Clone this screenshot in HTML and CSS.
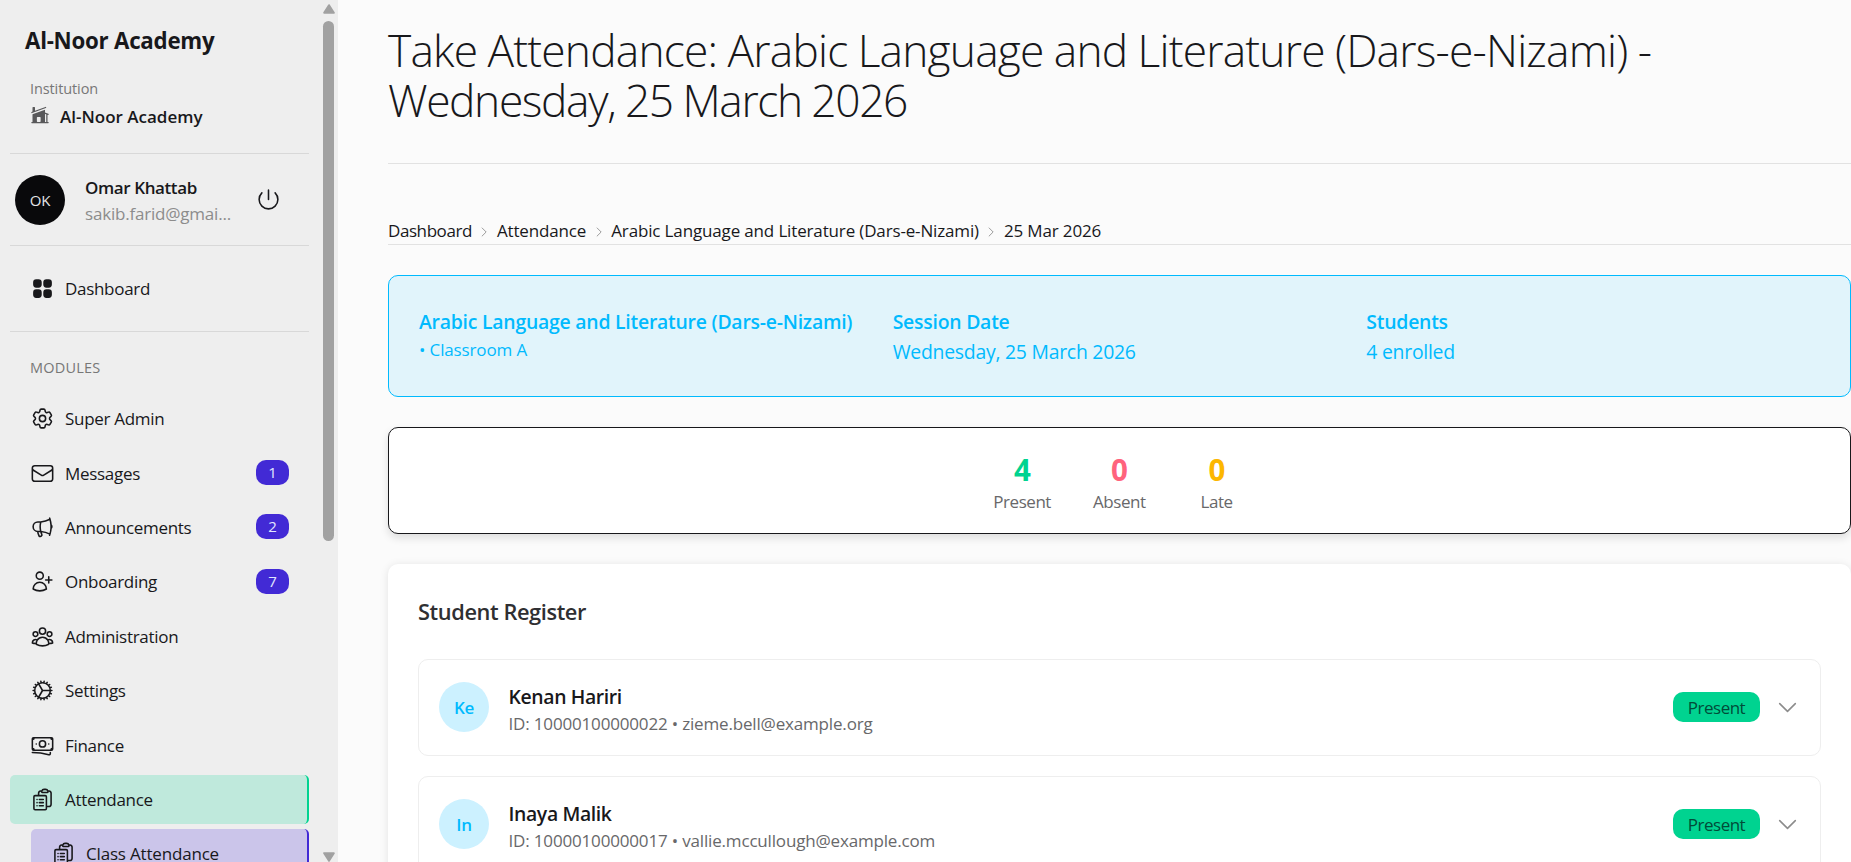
FILE: index.html
```html
<!DOCTYPE html>
<html lang="en">
<head>
  <meta charset="UTF-8">
  <meta name="viewport" content="width=device-width, initial-scale=1.0">
  <title>Take Attendance</title>
  <link rel="stylesheet" href="styles.css">
</head>
<body>
  <!-- Shared icons -->
  <svg class="sprite">
    <symbol id="clipboard" viewBox="0 0 24 24">
      <path d="M9 12h3.75M9 15h3.75M9 18h3.75m3 .75H18a2.25 2.25 0 0 0 2.25-2.25V6.108c0-1.135-.845-2.098-1.976-2.192a48.424 48.424 0 0 0-1.123-.08m-5.801 0c-.065.21-.1.433-.1.664 0 .414.336.75.75.75h4.5a.75.75 0 0 0 .75-.75 2.25 2.25 0 0 0-.1-.664m-5.8 0A2.251 2.251 0 0 1 13.5 2.25H15c1.012 0 1.867.668 2.15 1.586m-5.8 0c-.376.023-.75.05-1.124.08C9.095 4.01 8.25 4.973 8.25 6.108V8.25m0 0H4.875c-.621 0-1.125.504-1.125 1.125v11.25c0 .621.504 1.125 1.125 1.125h9.75c.621 0 1.125-.504 1.125-1.125V9.375c0-.621-.504-1.125-1.125-1.125H8.25ZM6.75 12h.008v.008H6.75V12Zm0 3h.008v.008H6.75V15Zm0 3h.008v.008H6.75V18Z"/>
    </symbol>
    <symbol id="chevron-down" viewBox="0 0 24 24">
      <path d="m19.5 8.25-7.5 7.5-7.5-7.5"/>
    </symbol>
    <symbol id="chevron-right" viewBox="0 0 7 12">
      <path d="m1 1 5 5-5 5"/>
    </symbol>
  </svg>

  <div class="layout">
    <aside class="sidebar">
      <div class="sidebar-content">
        <div class="brand">Al-Noor Academy</div>

        <div class="institution">
          <span class="institution-label">Institution</span>
          <div class="institution-name">
            <svg class="icon-home" viewBox="0 0 24 24">
              <path d="M19.006 3.705a.75.75 0 1 0-.512-1.41L6 6.838V3a.75.75 0 0 0-.75-.75h-1.5A.75.75 0 0 0 3 3v4.93l-1.006.365a.75.75 0 0 0 .512 1.41l16.5-6Z"/>
              <path fill-rule="evenodd" d="M3.019 11.114 18 5.667v3.421l4.006 1.457a.75.75 0 1 1-.512 1.41l-.494-.18v8.475h.75a.75.75 0 0 1 0 1.5H2.25a.75.75 0 0 1 0-1.5H3v-9.129l.019-.007ZM18 20.25v-9.566l1.5.546v9.02H18Zm-9-6a.75.75 0 0 0-.75.75v4.5c0 .414.336.75.75.75h3a.75.75 0 0 0 .75-.75V15a.75.75 0 0 0-.75-.75H9Z"/>
            </svg>
            <span>Al-Noor Academy</span>
          </div>
        </div>

        <div class="user">
          <div class="user-avatar">OK</div>
          <div class="user-info">
            <div class="user-name">Omar Khattab</div>
            <div class="user-email">sakib.farid@gmai...</div>
          </div>
          <svg class="icon" viewBox="0 0 24 24"><path d="M5.636 5.636a9 9 0 1 0 12.728 0M12 3v9"/></svg>
        </div>

        <ul class="menu menu-top">
          <li>
            <a href="#" class="menu-link">
              <svg class="icon icon-solid" viewBox="0 0 24 24"><path fill-rule="evenodd" d="M3 6a3 3 0 0 1 3-3h2.25a3 3 0 0 1 3 3v2.25a3 3 0 0 1-3 3H6a3 3 0 0 1-3-3V6Zm9.75 0a3 3 0 0 1 3-3H18a3 3 0 0 1 3 3v2.25a3 3 0 0 1-3 3h-2.25a3 3 0 0 1-3-3V6ZM3 15.75a3 3 0 0 1 3-3h2.25a3 3 0 0 1 3 3V18a3 3 0 0 1-3 3H6a3 3 0 0 1-3-3v-2.25Zm9.75 0a3 3 0 0 1 3-3H18a3 3 0 0 1 3 3V18a3 3 0 0 1-3 3h-2.25a3 3 0 0 1-3-3v-2.25Z"/></svg>
              <span>Dashboard</span>
            </a>
          </li>
        </ul>

        <div class="menu-title">MODULES</div>
        <ul class="menu">
          <li>
            <a href="#" class="menu-link">
              <svg class="icon" viewBox="0 0 24 24"><path d="M9.594 3.94c.09-.542.56-.94 1.11-.94h2.593c.55 0 1.02.398 1.11.94l.213 1.281c.063.374.313.686.645.87.074.04.147.083.22.127.325.196.72.257 1.075.124l1.217-.456a1.125 1.125 0 0 1 1.37.49l1.296 2.247a1.125 1.125 0 0 1-.26 1.431l-1.003.827c-.293.241-.438.613-.43.992a7.723 7.723 0 0 1 0 .255c-.008.378.137.75.43.991l1.004.827c.424.35.534.955.26 1.43l-1.298 2.247a1.125 1.125 0 0 1-1.369.491l-1.217-.456c-.355-.133-.75-.072-1.076.124a6.47 6.47 0 0 1-.22.128c-.331.183-.581.495-.644.869l-.213 1.281c-.09.543-.56.94-1.11.94h-2.594c-.55 0-1.019-.398-1.11-.94l-.213-1.281c-.062-.374-.312-.686-.644-.87a6.52 6.52 0 0 1-.22-.127c-.325-.196-.72-.257-1.076-.124l-1.217.456a1.125 1.125 0 0 1-1.369-.49l-1.297-2.247a1.125 1.125 0 0 1 .26-1.431l1.004-.827c.292-.24.437-.613.43-.991a6.932 6.932 0 0 1 0-.255c.007-.38-.138-.751-.43-.992l-1.004-.827a1.125 1.125 0 0 1-.26-1.43l1.297-2.247a1.125 1.125 0 0 1 1.37-.491l1.216.456c.356.133.751.072 1.076-.124.072-.044.146-.086.22-.128.332-.183.582-.495.644-.869l.214-1.28Z"/><path d="M15 12a3 3 0 1 1-6 0 3 3 0 0 1 6 0Z"/></svg>
              <span>Super Admin</span>
            </a>
          </li>
          <li>
            <a href="#" class="menu-link">
              <svg class="icon" viewBox="0 0 24 24"><path d="M21.75 6.75v10.5a2.25 2.25 0 0 1-2.25 2.25h-15a2.25 2.25 0 0 1-2.25-2.25V6.75m19.5 0A2.25 2.25 0 0 0 19.5 4.5h-15a2.25 2.25 0 0 0-2.25 2.25m19.5 0v.243a2.25 2.25 0 0 1-1.07 1.916l-7.5 4.615a2.25 2.25 0 0 1-2.36 0L3.32 8.91a2.25 2.25 0 0 1-1.07-1.916V6.75"/></svg>
              <span>Messages</span>
              <span class="count">1</span>
            </a>
          </li>
          <li>
            <a href="#" class="menu-link">
              <svg class="icon" viewBox="0 0 24 24"><path d="M10.34 15.84c-.688-.06-1.386-.09-2.09-.09H7.5a4.5 4.5 0 1 1 0-9h.75c.704 0 1.402-.03 2.09-.09m0 9.18c.253.962.584 1.892.985 2.783.247.55.06 1.21-.463 1.511l-.657.38c-.551.318-1.26.117-1.527-.461a20.845 20.845 0 0 1-1.44-4.282m3.102.069a18.03 18.03 0 0 1-.59-4.59c0-1.586.205-3.124.59-4.59m0 9.18a23.848 23.848 0 0 1 8.835 2.535M10.34 6.66a23.847 23.847 0 0 0 8.835-2.535m0 0A23.74 23.74 0 0 0 18.795 3m.38 1.125a23.91 23.91 0 0 1 1.014 5.395m-1.014 8.855c-.118.38-.245.754-.38 1.125m.38-1.125a23.91 23.91 0 0 0 1.014-5.395m0-3.46c.495.413.811 1.035.811 1.73 0 .695-.316 1.317-.811 1.73m0-3.46a24.347 24.347 0 0 1 0 3.46"/></svg>
              <span>Announcements</span>
              <span class="count">2</span>
            </a>
          </li>
          <li>
            <a href="#" class="menu-link">
              <svg class="icon" viewBox="0 0 24 24"><path d="M18 7.5v3m0 0v3m0-3h3m-3 0h-3m-2.25-4.125a3.375 3.375 0 1 1-6.75 0 3.375 3.375 0 0 1 6.75 0ZM3 19.235v-.11a6.375 6.375 0 0 1 12.75 0v.109A12.318 12.318 0 0 1 9.374 21c-2.331 0-4.512-.645-6.374-1.766Z"/></svg>
              <span>Onboarding</span>
              <span class="count">7</span>
            </a>
          </li>
          <li>
            <a href="#" class="menu-link">
              <svg class="icon" viewBox="0 0 24 24"><path d="M18 18.72a9.094 9.094 0 0 0 3.741-.479 3 3 0 0 0-4.682-2.72m.94 3.198.001.031c0 .225-.012.447-.037.666A11.944 11.944 0 0 1 12 21c-2.17 0-4.207-.576-5.963-1.584A6.062 6.062 0 0 1 6 18.719m12 0a5.971 5.971 0 0 0-.941-3.197m0 0A5.995 5.995 0 0 0 12 12.75a5.995 5.995 0 0 0-5.058 2.772m0 0a3 3 0 0 0-4.681 2.72 8.986 8.986 0 0 0 3.74.477m.94-3.197a5.971 5.971 0 0 0-.94 3.197M15 6.75a3 3 0 1 1-6 0 3 3 0 0 1 6 0Zm6 3a2.25 2.25 0 1 1-4.5 0 2.25 2.25 0 0 1 4.5 0Zm-13.5 0a2.25 2.25 0 1 1-4.5 0 2.25 2.25 0 0 1 4.5 0Z"/></svg>
              <span>Administration</span>
            </a>
          </li>
          <li>
            <a href="#" class="menu-link">
              <svg class="icon" viewBox="0 0 24 24"><path d="M4.5 12a7.5 7.5 0 0 0 15 0m-15 0a7.5 7.5 0 1 1 15 0m-15 0H3m16.5 0H21m-1.5 0H12m-8.457 3.077 1.41-.513m14.095-5.13 1.41-.513M5.106 17.785l1.15-.964m11.49-9.642 1.149-.964M7.501 19.795l.75-1.3m7.5-12.99.75-1.3m-6.063 16.658.26-1.477m2.605-14.772.26-1.477m0 17.726-.26-1.477M10.698 4.614l-.26-1.477M16.5 19.794l-.75-1.299M7.5 4.205 12 12m6.894 5.785-1.149-.964M6.256 7.178l-1.15-.964m15.352 8.864-1.41-.513M4.954 9.435l-1.41-.514M12.002 12l-3.75 6.495"/></svg>
              <span>Settings</span>
            </a>
          </li>
          <li>
            <a href="#" class="menu-link">
              <svg class="icon" viewBox="0 0 24 24"><path d="M2.25 18.75a60.07 60.07 0 0 1 15.797 2.101c.727.198 1.453-.342 1.453-1.096V18.75M3.75 4.5v.75A.75.75 0 0 1 3 6h-.75m0 0v-.375c0-.621.504-1.125 1.125-1.125H20.25M2.25 6v9m18-10.5v.75c0 .414.336.75.75.75h.75m-1.5-1.5h.375c.621 0 1.125.504 1.125 1.125v9.75c0 .621-.504 1.125-1.125 1.125h-.375m1.5-1.5H21a.75.75 0 0 0-.75.75v.75m0 0H3.75m0 0h-.375a1.125 1.125 0 0 1-1.125-1.125V15m1.5 1.5v-.75A.75.75 0 0 0 3 15h-.75M15 10.5a3 3 0 1 1-6 0 3 3 0 0 1 6 0Zm3 0h.008v.008H18V10.5Zm-12 0h.008v.008H6V10.5Z"/></svg>
              <span>Finance</span>
            </a>
          </li>
          <li>
            <a href="#" class="menu-link active">
              <svg class="icon"><use href="#clipboard"/></svg>
              <span>Attendance</span>
            </a>
            <ul class="submenu">
              <li>
                <a href="#" class="menu-link active-sub">
                  <svg class="icon"><use href="#clipboard"/></svg>
                  <span>Class Attendance</span>
                </a>
              </li>
            </ul>
          </li>
        </ul>
      </div>

      <div class="scrollbar">
        <svg class="scroll-arrow" viewBox="0 0 12 10"><path d="M6 1.2 10.8 8.8H1.2Z"/></svg>
        <div class="scroll-thumb"></div>
        <svg class="scroll-arrow scroll-down" viewBox="0 0 12 10"><path d="M1.2 1.2h9.6L6 8.8Z"/></svg>
      </div>
    </aside>

    <main class="content">
      <h1 class="page-title">Take Attendance: Arabic Language and Literature (Dars-e-Nizami) - <span class="page-title-date">Wednesday, 25 March 2026</span></h1>

      <nav class="breadcrumbs">
        <a href="#" class="crumb-home">Dashboard</a>
        <svg class="separator"><use href="#chevron-right"/></svg>
        <a href="#">Attendance</a>
        <svg class="separator"><use href="#chevron-right"/></svg>
        <a href="#">Arabic Language and Literature (Dars-e-Nizami)</a>
        <svg class="separator"><use href="#chevron-right"/></svg>
        <span>25 Mar 2026</span>
      </nav>

      <section class="session">
        <div>
          <h3>Arabic Language and Literature (Dars-e-Nizami)</h3>
          <p class="session-room">• Classroom A</p>
        </div>
        <div>
          <h3>Session Date</h3>
          <p>Wednesday, 25 March 2026</p>
        </div>
        <div>
          <h3>Students</h3>
          <p>4 enrolled</p>
        </div>
      </section>

      <section class="stats">
        <div class="stat">
          <div class="stat-value present">4</div>
          <div class="stat-label">Present</div>
        </div>
        <div class="stat">
          <div class="stat-value absent">0</div>
          <div class="stat-label">Absent</div>
        </div>
        <div class="stat">
          <div class="stat-value late">0</div>
          <div class="stat-label">Late</div>
        </div>
      </section>

      <section class="register">
        <h2>Student Register</h2>
        <div class="student">
          <div class="student-avatar">Ke</div>
          <div class="student-info">
            <div class="student-name">Kenan Hariri</div>
            <div class="student-meta">ID: 10000100000022 • zieme.bell@example.org</div>
          </div>
          <span class="status">Present</span>
          <svg class="icon chevron"><use href="#chevron-down"/></svg>
        </div>
        <div class="student">
          <div class="student-avatar">In</div>
          <div class="student-info">
            <div class="student-name">Inaya Malik</div>
            <div class="student-meta">ID: 10000100000017 • vallie.mccullough@example.com</div>
          </div>
          <span class="status">Present</span>
          <svg class="icon chevron"><use href="#chevron-down"/></svg>
        </div>
      </section>
    </main>
  </div>
</body>
</html>
```
FILE: styles.css
```css
* {
  box-sizing: border-box;
  margin: 0;
  padding: 0;
}

body {
  font-family: "Open Sans", "Noto Sans", sans-serif;
  font-size: 17px;
  letter-spacing: -0.25px;
  line-height: 25px;
  color: #18181b;
  background-color: #fbfbfb;
  overflow: hidden;
}

ul {
  list-style: none;
}

a {
  color: inherit;
  text-decoration: none;
}

.sprite {
  display: none;
}

.icon {
  width: 25px;
  height: 25px;
  flex-shrink: 0;
  fill: none;
  stroke: currentColor;
  stroke-width: 1.5;
  stroke-linecap: round;
  stroke-linejoin: round;
}

.icon-solid {
  fill: currentColor;
  stroke: none;
}

.layout {
  display: flex;
  height: 862px;
}

/* Sidebar */
.sidebar {
  display: flex;
  width: 338px;
  flex-shrink: 0;
  background-color: #eeeeee;
}

.sidebar-content {
  width: 323px;
  padding: 0 14px 0 10px;
  overflow: hidden;
}

.brand {
  padding: 26px 15px 0;
  font-size: 22.3px;
  font-weight: 700;
  line-height: 30px;
  letter-spacing: -0.25px;
}

.institution {
  height: 98px;
  padding: 22px 20px 0;
  border-bottom: 1px solid #d8d8d8;
}

.institution-label {
  display: block;
  font-size: 14.5px;
  line-height: 22px;
  letter-spacing: -0.1px;
  color: #777777;
}

.institution-name {
  display: flex;
  align-items: center;
  gap: 10px;
  margin-top: 4px;
  font-weight: 600;
  letter-spacing: 0;
}

.icon-home {
  width: 20px;
  height: 20px;
  margin-top: -4px;
  fill: #58585a;
}

.user {
  display: flex;
  align-items: center;
  height: 92px;
  padding: 0 28px 0 5px;
  border-bottom: 1px solid #d8d8d8;
}

.user-avatar {
  width: 50px;
  height: 50px;
  border-radius: 50%;
  background-color: #09090b;
  color: #e4e4e7;
  font-size: 15px;
  line-height: 51px;
  text-align: center;
}

.user-info {
  flex: 1;
  padding: 2px 0 0 20px;
  line-height: 26px;
}

.user-name {
  font-weight: 600;
  letter-spacing: -0.4px;
}

.user-email {
  letter-spacing: -0.2px;
  color: #8c8c8c;
}

.menu-link {
  display: flex;
  align-items: center;
  gap: 10px;
  height: 49.4px;
  margin-bottom: 5px;
  padding: 0 20px;
  border-radius: 5px;
  letter-spacing: -0.3px;
}

.menu-top {
  height: 86px;
  padding-top: 18px;
  border-bottom: 1px solid #d8d8d8;
}

.menu-title {
  padding: 24px 20px 15px;
  font-size: 14.5px;
  line-height: 23px;
  letter-spacing: 0.2px;
  color: #777777;
}

.count {
  width: 33px;
  height: 25px;
  margin: -1px 0 0 auto;
  border-radius: 10px;
  background-color: #422ad5;
  color: #e0e7ff;
  font-size: 15px;
  line-height: 25px;
  text-align: center;
}

.active {
  background-color: #bfe9dc;
  border-right: 2px solid #00d390;
}

.submenu {
  padding-left: 21px;
}

.active-sub {
  background-color: #cbc5ea;
  border-right: 2px solid #422ad5;
  letter-spacing: -0.18px;
}

.scrollbar {
  display: flex;
  flex-direction: column;
  width: 11px;
  padding-top: 4px;
}

.scroll-arrow {
  width: 12px;
  height: 10px;
  fill: #a1a1a1;
  stroke: #a1a1a1;
  stroke-width: 2;
  stroke-linejoin: round;
}

.scroll-thumb {
  height: 520px;
  margin-top: 7px;
  border-radius: 6px;
  background-color: #a1a1a1;
}

.scroll-down {
  margin-top: auto;
}

/* Main content */
.content {
  flex: 1;
  padding: 25px 0 0 50px;
}

.page-title {
  height: 139px;
  padding-right: 100px;
  border-bottom: 1px solid #e2e2e2;
  font-size: 44.3px;
  font-weight: 300;
  line-height: 50px;
  letter-spacing: -0.8px;
  word-spacing: -0.5px;
}

.page-title-date {
  letter-spacing: -1.37px;
}

.breadcrumbs {
  display: flex;
  align-items: center;
  height: 81px;
  padding-top: 53px;
  border-bottom: 1px solid #e2e2e2;
  letter-spacing: -0.15px;
}

.crumb-home {
  letter-spacing: -0.42px;
}

.separator {
  width: 6px;
  height: 12px;
  margin: 3px 9.5px 0;
  fill: none;
  stroke: #8c8c8c;
}

.session {
  display: grid;
  grid-template-columns: repeat(3, 1fr);
  gap: 20px;
  height: 122px;
  margin-top: 30px;
  padding: 32px 30px;
  border: 1px solid #00bafe;
  border-radius: 10px;
  background-color: #e1f4fb;
  color: #00bafe;
  font-size: 19.4px;
  line-height: 32px;
}

.session h3 {
  font-size: 19.4px;
  font-weight: 600;
  line-height: 28px;
  letter-spacing: -0.23px;
  white-space: nowrap;
}

.session .session-room {
  font-size: 17px;
  line-height: 27px;
  letter-spacing: -0.13px;
}

.stats {
  display: flex;
  justify-content: center;
  gap: 42px;
  height: 107px;
  margin-top: 30px;
  padding-top: 23px;
  border: 1px solid #18181b;
  border-radius: 10px;
  background-color: #ffffff;
  box-shadow: 0 4px 8px rgba(0, 0, 0, 0.12);
}

.stat {
  text-align: center;
  letter-spacing: -0.45px;
}

.stat:last-child {
  padding: 0 13px;
}

.stat-value {
  font-size: 29.5px;
  font-weight: 700;
  line-height: 37px;
}

.stat-label {
  line-height: 27px;
  color: #68686a;
}

.present {
  color: #00d390;
}

.absent {
  color: #ff637d;
}

.late {
  color: #fcb700;
}

.register {
  height: 340px;
  margin-top: 30px;
  padding: 34px 30px 0;
  border-radius: 10px;
  background-color: #ffffff;
  box-shadow: 0 1px 8px rgba(0, 0, 0, 0.1);
}

.register h2 {
  margin-bottom: 33px;
  font-size: 21.8px;
  font-weight: 600;
  line-height: 28px;
  letter-spacing: -0.41px;
  color: #2f2f32;
}

.student {
  display: flex;
  align-items: center;
  height: 97px;
  margin-bottom: 20px;
  padding: 0 20px 2px;
  border: 1px solid #eeeeee;
  border-radius: 10px;
}

.student-avatar {
  width: 50px;
  height: 50px;
  padding-top: 1px;
  border-radius: 50%;
  background-color: #ccf1ff;
  color: #00bafe;
  font-weight: 600;
  line-height: 50px;
  text-align: center;
}

.student-info {
  flex: 1;
  padding: 5px 0 0 19.5px;
}

.student-name {
  font-size: 19.4px;
  font-weight: 600;
  line-height: 29px;
  letter-spacing: -0.37px;
}

.student-meta {
  line-height: 26px;
  letter-spacing: -0.17px;
  color: #68686a;
}

.status {
  width: 87px;
  height: 30px;
  border-radius: 10px;
  background-color: #00d390;
  color: #004c39;
  line-height: 31px;
  letter-spacing: -0.5px;
  text-align: center;
}

.chevron {
  margin: 2px 0 0 15px;
  color: #8c8c8c;
}
```
